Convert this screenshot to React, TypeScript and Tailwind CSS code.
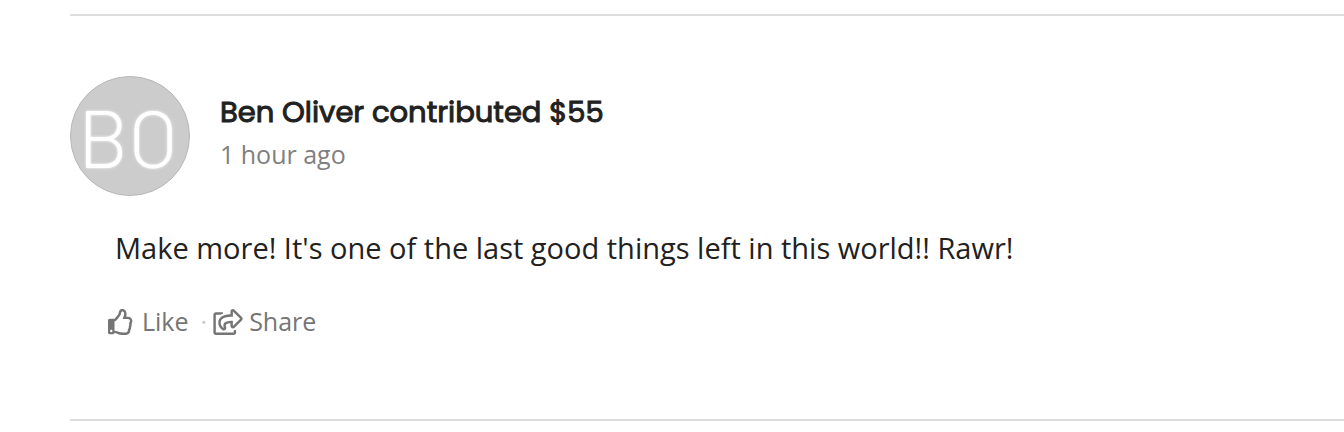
import { FaRegShareSquare, FaRegThumbsUp } from "react-icons/fa";

export default function App() {
  return (
    <main className="bg-white pt-[14px] pl-[70px] font-['Open_Sans',sans-serif] text-[#212121]">
      <article className="border-y-2 border-[#dddddd] pt-[60px] pb-20">
        <header className="flex items-center gap-[30px]">
          <div className="flex size-[120px] items-center justify-center rounded-full border border-[#b8b8b8] bg-[#cccccc] pr-1 font-['Barlow','Roboto',sans-serif] text-[80px] leading-none font-light text-white [text-shadow:0_0_3px_white]">BO</div>
          <div className="pb-2">
            <h2 className="font-['Poppins','Inter',sans-serif] text-[29px] leading-[44px] font-normal [-webkit-text-stroke:1px]">Ben Oliver contributed $55</h2>
            <p className="text-[25px] leading-[40px] text-[#808080]">1 hour ago</p>
          </div>
        </header>
        <p className="mt-[30px] pl-[45px] text-[29px] leading-[44px]">Make more! It's one of the last good things left in this world!! Rawr!</p>
        <div className="mt-[34px] flex items-center pl-[38px] text-[25px] leading-[35px] text-[#757575]">
          <button className="flex items-center gap-2"><FaRegThumbsUp className="size-[26px]" />Like</button>
          <span className="mr-1.5 ml-3 text-[#cccccc]">·</span>
          <button className="flex items-center gap-[6px]"><FaRegShareSquare className="h-[26px] w-[30px]" />Share</button>
        </div>
      </article>
    </main>
  );
}
